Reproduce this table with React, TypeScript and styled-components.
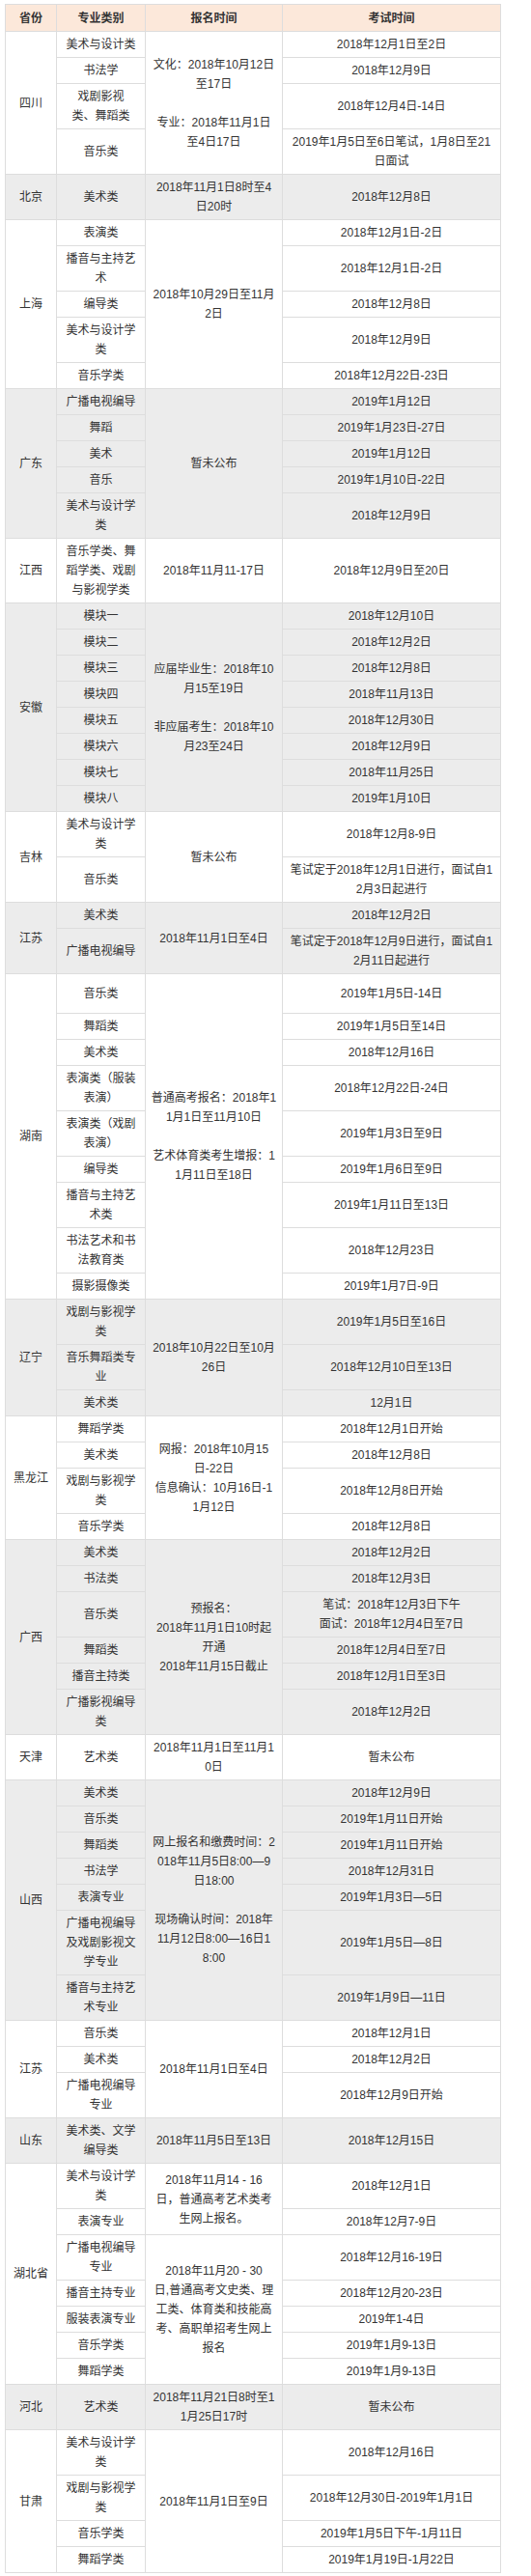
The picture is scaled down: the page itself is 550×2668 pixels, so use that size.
import React from 'react';
import styled, { createGlobalStyle } from 'styled-components';

const GlobalStyle = createGlobalStyle`
  body {
    margin: 0;
    background: #fff;
  }
`;

const Page = styled.div`
  padding: 4px 0 4px 5px;
`;

const Table = styled.table`
  width: 513px;
  border-collapse: collapse;
  table-layout: fixed;
  font-family: "Liberation Sans", "Noto Sans CJK SC", sans-serif;
  font-size: 12px;
  line-height: 20px;
  color: #333;
`;

const HeadRow = styled.tr`
  height: 28px;
  background: #fce8da;
`;

const HeadCell = styled.th`
  border: 1px solid #ddd;
  padding: 3px 4px;
  font-weight: bold;
  text-align: center;
  vertical-align: middle;
`;

const Row = styled.tr<{ $shade?: boolean; $tall?: boolean }>`
  background: ${props => (props.$shade ? '#ececec' : '#fff')};
  ${props => props.$tall && `height: 41px;`}
`;

const Cell = styled.td`
  border: 1px solid #ddd;
  padding: 3px 4px;
  text-align: center;
  vertical-align: middle;
  white-space: pre;
`;

type Item = { major: string; exam: string; tall?: boolean };
type Reg = { span: number; text: string };
type Group = { province: string; reg: string | Reg[]; rows: Item[] };

const groups: Group[] = [
  {
    province: '四川',
    reg: '文化：2018年10月12日\n至17日\n\n专业：2018年11月1日\n至4日17日',
    rows: [
      { major: '美术与设计类', exam: '2018年12月1日至2日' },
      { major: '书法学', exam: '2018年12月9日' },
      { major: '戏剧影视\n类、舞蹈类', exam: '2018年12月4日-14日' },
      { major: '音乐类', exam: '2019年1月5日至6日笔试，1月8日至21\n日面试' }
    ]
  },
  {
    province: '北京',
    reg: '2018年11月1日8时至4\n日20时',
    rows: [{ major: '美术类', exam: '2018年12月8日' }]
  },
  {
    province: '上海',
    reg: '2018年10月29日至11月\n2日',
    rows: [
      { major: '表演类', exam: '2018年12月1日-2日' },
      { major: '播音与主持艺\n术', exam: '2018年12月1日-2日' },
      { major: '编导类', exam: '2018年12月8日' },
      { major: '美术与设计学\n类', exam: '2018年12月9日' },
      { major: '音乐学类', exam: '2018年12月22日-23日' }
    ]
  },
  {
    province: '广东',
    reg: '暂未公布',
    rows: [
      { major: '广播电视编导', exam: '2019年1月12日' },
      { major: '舞蹈', exam: '2019年1月23日-27日' },
      { major: '美术', exam: '2019年1月12日' },
      { major: '音乐', exam: '2019年1月10日-22日' },
      { major: '美术与设计学\n类', exam: '2018年12月9日' }
    ]
  },
  {
    province: '江西',
    reg: '2018年11月11-17日',
    rows: [{ major: '音乐学类、舞\n蹈学类、戏剧\n与影视学类', exam: '2018年12月9日至20日' }]
  },
  {
    province: '安徽',
    reg: '应届毕业生：2018年10\n月15至19日\n\n非应届考生：2018年10\n月23至24日',
    rows: [
      { major: '模块一', exam: '2018年12月10日' },
      { major: '模块二', exam: '2018年12月2日' },
      { major: '模块三', exam: '2018年12月8日' },
      { major: '模块四', exam: '2018年11月13日' },
      { major: '模块五', exam: '2018年12月30日' },
      { major: '模块六', exam: '2018年12月9日' },
      { major: '模块七', exam: '2018年11月25日' },
      { major: '模块八', exam: '2019年1月10日' }
    ]
  },
  {
    province: '吉林',
    reg: '暂未公布',
    rows: [
      { major: '美术与设计学\n类', exam: '2018年12月8-9日' },
      { major: '音乐类', exam: '笔试定于2018年12月1日进行，面试自1\n2月3日起进行' }
    ]
  },
  {
    province: '江苏',
    reg: '2018年11月1日至4日',
    rows: [
      { major: '美术类', exam: '2018年12月2日' },
      { major: '广播电视编导', exam: '笔试定于2018年12月9日进行，面试自1\n2月11日起进行' }
    ]
  },
  {
    province: '湖南',
    reg: '普通高考报名：2018年1\n1月1日至11月10日\n\n艺术体育类考生增报：1\n1月11日至18日',
    rows: [
      { major: '音乐类', exam: '2019年1月5日-14日', tall: true },
      { major: '舞蹈类', exam: '2019年1月5日至14日' },
      { major: '美术类', exam: '2018年12月16日' },
      { major: '表演类（服装\n表演）', exam: '2018年12月22日-24日' },
      { major: '表演类（戏剧\n表演）', exam: '2019年1月3日至9日' },
      { major: '编导类', exam: '2019年1月6日至9日' },
      { major: '播音与主持艺\n术类', exam: '2019年1月11日至13日' },
      { major: '书法艺术和书\n法教育类', exam: '2018年12月23日' },
      { major: '摄影摄像类', exam: '2019年1月7日-9日' }
    ]
  },
  {
    province: '辽宁',
    reg: '2018年10月22日至10月\n26日',
    rows: [
      { major: '戏剧与影视学\n类', exam: '2019年1月5日至16日' },
      { major: '音乐舞蹈类专\n业', exam: '2018年12月10日至13日' },
      { major: '美术类', exam: '12月1日' }
    ]
  },
  {
    province: '黑龙江',
    reg: '网报：2018年10月15\n日-22日\n信息确认：10月16日-1\n1月12日',
    rows: [
      { major: '舞蹈学类', exam: '2018年12月1日开始' },
      { major: '美术类', exam: '2018年12月8日' },
      { major: '戏剧与影视学\n类', exam: '2018年12月8日开始' },
      { major: '音乐学类', exam: '2018年12月8日' }
    ]
  },
  {
    province: '广西',
    reg: '预报名：\n2018年11月1日10时起\n开通\n2018年11月15日截止',
    rows: [
      { major: '美术类', exam: '2018年12月2日' },
      { major: '书法类', exam: '2018年12月3日' },
      { major: '音乐类', exam: '笔试：2018年12月3日下午\n面试：2018年12月4日至7日' },
      { major: '舞蹈类', exam: '2018年12月4日至7日' },
      { major: '播音主持类', exam: '2018年12月1日至3日' },
      { major: '广播影视编导\n类', exam: '2018年12月2日' }
    ]
  },
  {
    province: '天津',
    reg: '2018年11月1日至11月1\n0日',
    rows: [{ major: '艺术类', exam: '暂未公布' }]
  },
  {
    province: '山西',
    reg: '网上报名和缴费时间：2\n018年11月5日8:00—9\n日18:00\n\n现场确认时间：2018年\n11月12日8:00—16日1\n8:00',
    rows: [
      { major: '美术类', exam: '2018年12月9日' },
      { major: '音乐类', exam: '2019年1月11日开始' },
      { major: '舞蹈类', exam: '2019年1月11日开始' },
      { major: '书法学', exam: '2018年12月31日' },
      { major: '表演专业', exam: '2019年1月3日—5日' },
      { major: '广播电视编导\n及戏剧影视文\n学专业', exam: '2019年1月5日—8日' },
      { major: '播音与主持艺\n术专业', exam: '2019年1月9日—11日' }
    ]
  },
  {
    province: '江苏',
    reg: '2018年11月1日至4日',
    rows: [
      { major: '音乐类', exam: '2018年12月1日' },
      { major: '美术类', exam: '2018年12月2日' },
      { major: '广播电视编导\n专业', exam: '2018年12月9日开始' }
    ]
  },
  {
    province: '山东',
    reg: '2018年11月5日至13日',
    rows: [{ major: '美术类、文学\n编导类', exam: '2018年12月15日' }]
  },
  {
    province: '湖北省',
    reg: [
      { span: 2, text: '2018年11月14 - 16\n日，普通高考艺术类考\n生网上报名。' },
      { span: 5, text: '2018年11月20 - 30\n日,普通高考文史类、理\n工类、体育类和技能高\n考、高职单招考生网上\n报名' }
    ],
    rows: [
      { major: '美术与设计学\n类', exam: '2018年12月1日' },
      { major: '表演专业', exam: '2018年12月7-9日' },
      { major: '广播电视编导\n专业', exam: '2018年12月16-19日' },
      { major: '播音主持专业', exam: '2018年12月20-23日' },
      { major: '服装表演专业', exam: '2019年1-4日' },
      { major: '音乐学类', exam: '2019年1月9-13日' },
      { major: '舞蹈学类', exam: '2019年1月9-13日' }
    ]
  },
  {
    province: '河北',
    reg: '2018年11月21日8时至1\n1月25日17时',
    rows: [{ major: '艺术类', exam: '暂未公布' }]
  },
  {
    province: '甘肃',
    reg: '2018年11月1日至9日',
    rows: [
      { major: '美术与设计学\n类', exam: '2018年12月16日' },
      { major: '戏剧与影视学\n类', exam: '2018年12月30日-2019年1月1日' },
      { major: '音乐学类', exam: '2019年1月5日下午-1月11日' },
      { major: '舞蹈学类', exam: '2019年1月19日-1月22日' }
    ]
  }
];

// registration cells keyed by the row they start on
const regStarts = (group: Group) => {
  const regs = typeof group.reg === 'string'
    ? [{ span: group.rows.length, text: group.reg }]
    : group.reg;
  const starts: Record<number, Reg> = {};
  let at = 0;
  regs.forEach(reg => {
    starts[at] = reg;
    at += reg.span;
  });
  return starts;
};

const ProvinceGroup = ({ group, shade }: { group: Group; shade: boolean }) => {
  const starts = regStarts(group);

  return (
    <>
      {group.rows.map((item, i) => (
        <Row key={i} $shade={shade} $tall={item.tall}>
          {i === 0 && <Cell rowSpan={group.rows.length}>{group.province}</Cell>}
          <Cell>{item.major}</Cell>
          {starts[i] && <Cell rowSpan={starts[i].span}>{starts[i].text}</Cell>}
          <Cell>{item.exam}</Cell>
        </Row>
      ))}
    </>
  );
};

const App = () => (
  <Page>
    <GlobalStyle />
    <Table>
      <colgroup>
        <col style={{ width: 53 }} />
        <col style={{ width: 92 }} />
        <col style={{ width: 142 }} />
        <col style={{ width: 226 }} />
      </colgroup>
      <thead>
        <HeadRow>
          <HeadCell>省份</HeadCell>
          <HeadCell>专业类别</HeadCell>
          <HeadCell>报名时间</HeadCell>
          <HeadCell>考试时间</HeadCell>
        </HeadRow>
      </thead>
      <tbody>
        {groups.map((group, i) => (
          <ProvinceGroup key={i} group={group} shade={i % 2 === 1} />
        ))}
      </tbody>
    </Table>
  </Page>
);

export default App;
